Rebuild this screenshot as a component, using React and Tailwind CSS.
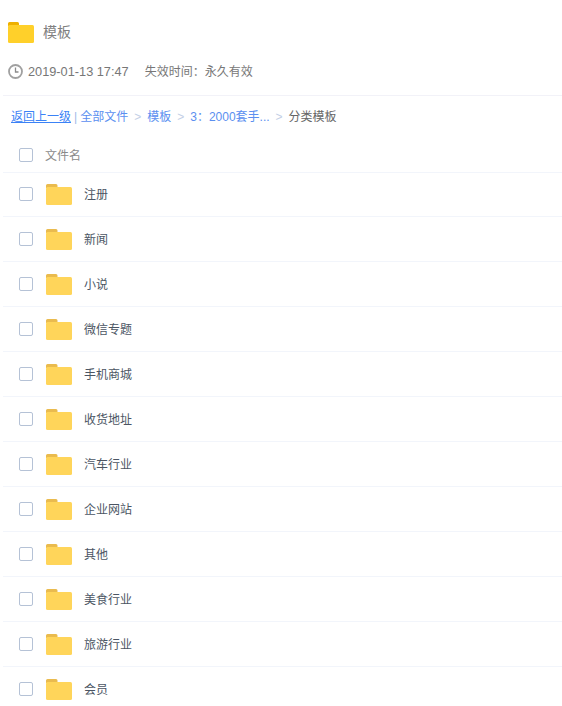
const font = { fontFamily: '"Liberation Sans", "Noto Sans CJK SC", sans-serif' };

function Folder({ big }) {
  return big ? (
    <svg width="26" height="21" viewBox="0 0 26 21" className="shrink-0 block">
      <path d="M0 1.500A1.500 1.500 0 0 1 1.500 0h8A1.500 1.500 0 0 1 11 1.500V4H0z" fill="#eeb000" />
      <rect x="0" y="3" width="26" height="18" rx="1.500" fill="#ffd02a" />
    </svg>
  ) : (
    <svg width="26" height="21" viewBox="0 0 26 21" className="shrink-0 block">
      <path d="M0 1.500A1.500 1.500 0 0 1 1.500 0h8.500A1.500 1.500 0 0 1 11.500 1.500V4H0z" fill="#eabb4e" />
      <rect x="0" y="3" width="26" height="18" rx="1.500" fill="#ffd55a" />
    </svg>
  );
}

function Check() {
  return <span className="block w-[14px] h-[14px] rounded-[2px] border border-[#b5c2d6] bg-white shrink-0" />;
}

function Row({ name, first }) {
  return (
    <div className={first ? "h-[44px] pb-[1px] flex items-center border-b border-[#f2f5fb] pl-[16px]" : "h-[45px] flex items-center border-b border-[#f2f5fb] pl-[16px]"}>
      <Check />
      <span className={first ? "ml-[13px] mt-[1px]" : "ml-[13px]"}><Folder /></span>
      <span className="ml-[12px] mt-[2px] text-[12px] text-[#4b5563]">{name}</span>
    </div>
  );
}

const names = ["注册", "新闻", "小说", "微信专题", "手机商城", "收货地址", "汽车行业", "企业网站", "其他", "美食行业", "旅游行业", "会员"];

export default function App() {
  return (
    <div style={font} className="w-[562px] h-[706px] overflow-hidden bg-white">
      <div className="pl-[8px] pt-[21px] flex items-center h-[44px]">
        <Folder big />
        <span className="ml-[9px] text-[14px] text-[#808080]">模板</span>
      </div>
      <div className="pl-[8px] mt-[20px] flex items-center h-[15px] text-[12px] text-[#777777]">
        <svg width="15" height="15" viewBox="0 0 15 15" className="block shrink-0">
          <circle cx="7.500" cy="7.500" r="6.500" fill="none" stroke="#a0a0a0" strokeWidth="1.800" />
          <path d="M7.500 3.500v4.500h3" fill="none" stroke="#8a8a8a" strokeWidth="1.300" />
        </svg>
        <span className="ml-[5px] text-[12.750px]">2019-01-13 17:47</span>
        <span className="ml-[16px]">失效时间：永久有效</span>
      </div>
      <div className="ml-[3px] mt-[16px] border-t border-[#f2f2f8] h-[42px] flex items-center pl-[8px] text-[12px]">
        <span className="text-[#3b82f6] underline">返回上一级</span>
        <span className="text-[#9db9e8] ml-[3px]">|</span>
        <span className="text-[#5b8ff0] ml-[3px]">全部文件</span>
        <span className="text-[#c3cfe6] mx-[6px]">&gt;</span>
        <span className="text-[#5b8ff0]">模板</span>
        <span className="text-[#c3cfe6] mx-[6px]">&gt;</span>
        <span className="text-[#5b8ff0]">3：2000套手...</span>
        <span className="text-[#c3cfe6] mx-[6px]">&gt;</span>
        <span className="text-[#666666]">分类模板</span>
      </div>
      <div className="ml-[3px]">
        <div className="h-[36px] flex items-center border-b border-[#f2f5fb] pl-[16px]">
          <Check />
          <span className="ml-[12px] mt-[2px] text-[12px] text-[#8a8a8a]">文件名</span>
        </div>
        {names.map((n, i) => <Row key={n} name={n} first={i === 0} />)}
      </div>
    </div>
  );
}
